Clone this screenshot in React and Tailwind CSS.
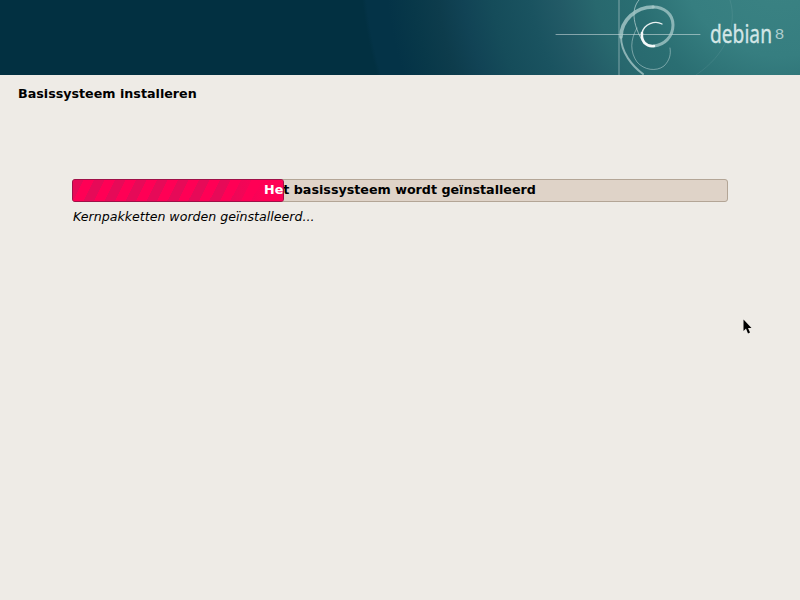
export default function App() {
  const label = "Het basissysteem wordt geïnstalleerd";
  return (
    <div className="relative w-[800px] h-[600px] overflow-hidden bg-[#eeebe6] font-['DejaVu_Sans',sans-serif] text-black">
      <header className="relative h-[75px] overflow-hidden bg-[radial-gradient(circle_at_780px_-44px,#3c8484_0px,#367e80_100px,#2a6e72_150px,#28686e_190px,#225a66_225px,#1a5360_254px,#154c5a_292px,#114355_320px,#0d3c4c_345px,#083849_369px,#043347_395px,#043347_416px,#023041_420px)]">
        <svg className="absolute inset-0" width="800" height="75" viewBox="0 0 800 75" fill="none">
          <g fill="none" strokeLinecap="round">
            <path d="M 696 75 C 726 55 738 25 730 0" stroke="#ffffff" strokeOpacity="0.07" />
            <path d="M 556 34.5 H 700" stroke="#ffffff" strokeOpacity="0.45" />
            <path d="M 619 0 V 75" stroke="#ffffff" strokeOpacity="0.28" strokeWidth="1.5" />
            <path d="M 639 0 C 632 8 631 22 644 44" stroke="#d8e8e8" strokeOpacity="0.6" />
            <path d="M 637 28 C 630 40 630 52 637 62 C 644 70 656 72 664 66 C 670 60 671 54 670 48" stroke="#d8e8e8" strokeOpacity="0.45" />
            <path d="M 621 37 C 621 52 632 66 643 74" stroke="#b5d2d2" strokeOpacity="0.7" strokeWidth="2" />
            <path d="M 653 7 C 636 7 621 20 621 37" stroke="#a9cbcb" strokeOpacity="0.8" strokeWidth="3.6" />
            <path d="M 654 46 C 664 45 673 37 673 25 C 673 14 664 7 653 7" stroke="#a9cbcb" strokeOpacity="0.75" strokeWidth="3" />
            <path d="M 642 33 C 641 41 646 47 654 46" stroke="#f4f9f9" strokeWidth="2.6" />
            <path d="M 662 24 C 655 20 644 24 642 33" stroke="#f4f9f9" strokeOpacity="0.95" strokeWidth="1.4" />
          </g>
          <text x="710" y="43" fontFamily="'Noto Sans', sans-serif" fontSize="26" fill="#d3e6e6" stroke="#d3e6e6" strokeWidth="0.35" textLength="62" lengthAdjust="spacingAndGlyphs">debian</text>
          <text x="775" y="39" fontFamily="'Liberation Sans', sans-serif" fontSize="15" fill="#cfe2e2" fillOpacity="0.8" textLength="9" lengthAdjust="spacingAndGlyphs">8</text>
        </svg>
      </header>

      <main className="flex flex-col">
        <h1 className="ml-[18px] mt-[11px] h-[16px] text-[12.7px] leading-[16px] font-bold">Basissysteem installeren</h1>
        <div className="relative ml-[72px] mt-[77px] h-[23px] w-[656px] rounded-[3px] border border-[#b3a596] bg-[#dfd3c8]">
          <div className="absolute inset-0 flex items-center justify-center pb-[2px] text-[12.7px] font-bold whitespace-nowrap">{label}</div>
          <div className="absolute -left-px -top-px -bottom-px w-[212px] overflow-hidden rounded-[3px] border border-[#a01048] bg-[#ff0055]">
            <div className="absolute inset-0 bg-[repeating-linear-gradient(117deg,#e60a58_0px,#e60a58_9.5px,#ff0055_9.5px,#ff0055_18.7px)]" />
            <div className="absolute inset-0 bg-[linear-gradient(90deg,#ff005500_0px,#ff005500_150px,#ff0055_192px)]" />
            <div className="absolute left-0 top-0 bottom-0 w-[654px] flex items-center justify-center pb-[2px] text-[12.7px] font-bold whitespace-nowrap text-white">{label}</div>
          </div>
        </div>
        <p className="ml-[73px] mt-[7px] h-[16px] text-[12.6px] leading-[16px] italic">Kernpakketten worden geïnstalleerd...</p>
      </main>

      <svg className="absolute left-[743px] top-[319px]" width="10" height="16" viewBox="0 0 10 16">
        <path d="M0.5 0.5 V12 L3 9.5 L5 14.5 L7 13.5 L5 9 H8.5 Z" fill="#000" />
      </svg>
    </div>
  );
}
